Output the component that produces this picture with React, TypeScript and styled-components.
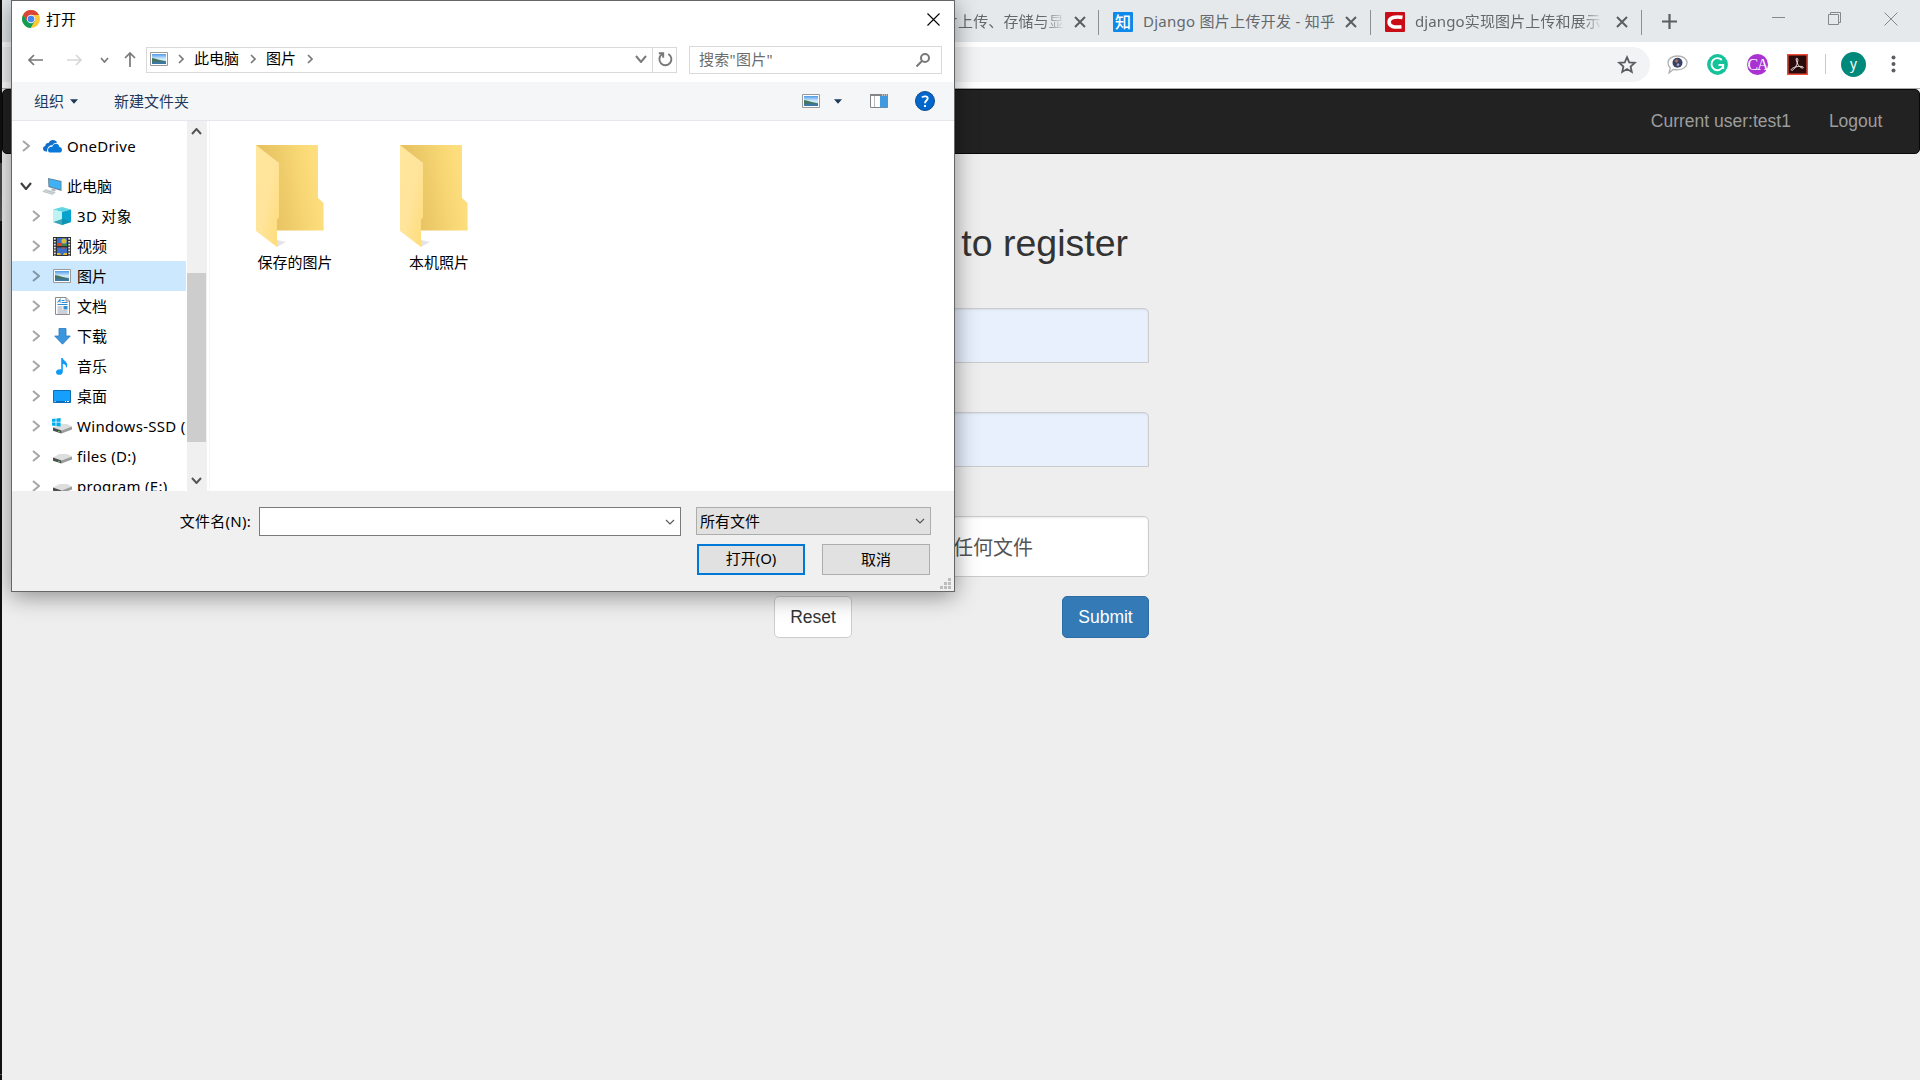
import React from "react";
import styled, { createGlobalStyle, css } from "styled-components";

const Global = createGlobalStyle`
  * { box-sizing: border-box; }
  body { margin: 0; overflow: hidden; }
`;

const uiFont = `"Noto Sans", "Noto Sans CJK SC", sans-serif`;
const pageFont = `"Liberation Sans", "Noto Sans CJK SC", sans-serif`;

/* ---------- browser ---------- */

const Screen = styled.div`
  position: relative;
  display: flex;
  width: 1920px;
  height: 1080px;
  overflow: hidden;
  background: #eee;
`;

const DesktopEdge = styled.div`
  width: 2px;
  flex: none;
  background: linear-gradient(#111 0 163px, #484848 163px 190px, #555 221px, #111 221px 1074px, #555 1074px 1075px, #111 1075px);
`;

const Browser = styled.div`
  flex: 1;
  display: flex;
  flex-direction: column;
  min-width: 0;
`;

const TabStrip = styled.div`
  display: flex;
  align-items: center;
  height: 42px;
  padding-left: 941px;
  background: #e5e9ec;
  font: 15px/42px ${uiFont};
  color: #64686c;
`;

const Tab = styled.div<{ $width: number }>`
  display: flex;
  align-items: center;
  width: ${(p) => p.$width}px;
  height: 25px;
  margin-top: 2px;
  border-right: 1px solid #8d9093;
`;

const TabTitle = styled.span<{ $width: number; $fade?: boolean; $gap: number; $spacing?: number }>`
  width: ${(p) => p.$width}px;
  margin: -3px 0 0 ${(p) => p.$gap}px;
  line-height: 24px;
  letter-spacing: ${(p) => p.$spacing ?? 0}px;
  white-space: nowrap;
  ${(p) =>
    p.$fade &&
    css`
      mask-image: linear-gradient(to right, #000 calc(100% - 22px), transparent);
    `}
`;

const Favicon = styled.span<{ $bg: string }>`
  display: flex;
  align-items: center;
  justify-content: center;
  width: 20px;
  height: 20px;
  margin-left: 14px;
  border-radius: 1px;
  background: ${(p) => p.$bg};
  color: #fff;
  font: 500 16px/19px ${uiFont};
`;

const Glyph = styled.svg<{ $ml?: number }>`
  display: block;
  flex: none;
  margin-left: ${(p) => p.$ml ?? 0}px;
`;

const WindowButtons = styled.div`
  display: flex;
  align-items: center;
  gap: 43px;
  margin: -5px 22px 0 auto;
`;

const Toolbar = styled.div`
  display: flex;
  align-items: center;
  height: 47px;
  padding-right: 20px;
  background: #fff;
  border-bottom: 1px solid #a9a9a9;
`;

const Omnibox = styled.div`
  display: flex;
  align-items: center;
  justify-content: flex-end;
  width: 1648px;
  height: 35px;
  padding-right: 13px;
  margin-top: -1px;
  border-radius: 0 18px 18px 0;
  background: #f1f3f4;
`;

const Extensions = styled.div`
  display: flex;
  align-items: center;
  margin-left: 17px;
  height: 46px;
  padding-bottom: 2px;
`;

const RoundBadge = styled.span<{ $bg: string; $size: number; $ml: number; $font: string; $spacing?: number }>`
  display: flex;
  align-items: center;
  justify-content: center;
  flex: none;
  width: ${(p) => p.$size}px;
  height: ${(p) => p.$size}px;
  margin-left: ${(p) => p.$ml}px;
  border-radius: 50%;
  background: ${(p) => p.$bg};
  color: #fff;
  font: ${(p) => p.$font};
  letter-spacing: ${(p) => p.$spacing ?? 0}px;
`;

const Rule = styled.span`
  width: 1px;
  height: 20px;
  margin-left: 17px;
  background: #c6c8ca;
`;

/* ---------- web page ---------- */

const Page = styled.main`
  flex: 1;
  background: #eee;
  font-family: ${pageFont};
  font-size: 17.5px;
  line-height: 25px;
`;

const Navbar = styled.nav`
  display: flex;
  justify-content: flex-end;
  height: 65px;
  padding: 19px 36.6px 0 0;
  gap: 38px;
  border: 1px solid #080808;
  border-radius: 5px;
  background: #222;
  color: #9d9d9d;
`;

const Form = styled.form`
  display: flex;
  flex-direction: column;
  width: 375px;
  margin-left: 772px;
`;

const Heading = styled.h2`
  margin: 69px 0 0;
  height: 85px;
  padding-right: 21px;
  text-align: right;
  font-size: 37.5px;
  font-weight: 400;
  line-height: 41px;
  color: #333;
`;

const Field = styled.div<{ $height: number; $bg: string; $radius: string; $gap: number }>`
  display: flex;
  align-items: center;
  height: ${(p) => p.$height}px;
  margin-bottom: ${(p) => p.$gap}px;
  padding: 4px 0 0 178px;
  border: 1px solid #ccc;
  border-radius: ${(p) => p.$radius};
  background: ${(p) => p.$bg};
  box-shadow: inset 0 1px 2px rgba(0, 0, 0, 0.08);
  color: #555;
  font-size: 20px;
`;

const Actions = styled.div`
  display: flex;
  justify-content: space-between;
`;

const FormButton = styled.button<{ $primary?: boolean }>`
  width: ${(p) => (p.$primary ? 87 : 78)}px;
  height: 42px;
  padding: 1px 0 0;
  border: 1px solid ${(p) => (p.$primary ? "#2e6da4" : "#ccc")};
  border-radius: 5px;
  background: ${(p) => (p.$primary ? "#337ab7" : "#fff")};
  color: ${(p) => (p.$primary ? "#fff" : "#333")};
  font: 17.5px ${pageFont};
`;

/* ---------- file dialog ---------- */

const Dialog = styled.section`
  position: absolute;
  left: 11px;
  top: 0;
  display: flex;
  flex-direction: column;
  width: 944px;
  height: 592px;
  border: 1px solid #666;
  background: #fff;
  box-shadow: 0 4px 22px rgba(0, 0, 0, 0.42);
  font: 15px/20px ${uiFont};
  color: #000;
`;

const TitleBar = styled.header`
  display: flex;
  align-items: center;
  height: 36px;
  padding: 0 14.500px 0 10px;
`;

const TitleText = styled.span`
  flex: 1;
  margin-left: 6px;
`;

const NavRow = styled.div`
  display: flex;
  align-items: center;
  height: 45px;
  padding-left: 16px;
`;

const AddressBar = styled.div`
  display: flex;
  align-items: center;
  width: 531px;
  height: 26px;
  margin-left: 10px;
  padding: 0 0 1px 3px;
  border: 1px solid #d9d9d9;
`;

const Crumb = styled.span<{ $ml: number; $lift?: number }>`
  margin: ${(p) => -(p.$lift ?? 0)}px 0 0 ${(p) => p.$ml}px;
  line-height: 22px;
`;

const Refresh = styled.span`
  display: flex;
  align-items: center;
  justify-content: center;
  width: 24px;
  height: 24px;
  margin: 1px 0 0 5px;
  padding-left: 1px;
  border-left: 1px solid #d9d9d9;
`;

const SearchBox = styled.div`
  display: flex;
  align-items: center;
  justify-content: space-between;
  width: 253px;
  height: 28px;
  margin-left: 12px;
  padding: 0 11px 0 9px;
  border: 1px solid #d9d9d9;
  color: #6d6d6d;
`;

const SearchText = styled.span`
  margin-top: -2px;
  letter-spacing: 0.3px;
`;

const CommandBar = styled.div`
  display: flex;
  align-items: center;
  height: 39px;
  padding: 0 19px 0 22px;
  border-bottom: 1px solid #e4e8ec;
  background: #f5f6f7;
  color: #1e395b;
`;

const Spacer = styled.span`
  flex: 1;
`;

const Body = styled.div`
  display: flex;
  height: 370px;
`;

const Tree = styled.div`
  width: 175px;
  height: 370px;
  padding-top: 10px;
  overflow: hidden;
`;

const TreeRow = styled.div<{ $level: number; $selected?: boolean; $after?: number }>`
  display: flex;
  align-items: center;
  width: 174px;
  height: 30px;
  margin-bottom: ${(p) => p.$after ?? 0}px;
  padding-left: ${(p) => (p.$level ? 18 : 8)}px;
  background: ${(p) => (p.$selected ? "#cce8ff" : "transparent")};
  white-space: nowrap;
  overflow: hidden;
`;

const TreeLabel = styled.span<{ $latin: boolean }>`
  letter-spacing: ${(p) => (p.$latin ? 0.3 : 0)}px;
`;

const Twisty = styled.span`
  display: flex;
  flex: none;
  width: 22px;
`;

const TreeIcon = styled.span`
  display: flex;
  flex: none;
  justify-content: center;
  width: 20px;
  margin-right: 5px;
`;

const Scrollbar = styled.div`
  display: flex;
  flex-direction: column;
  width: 20px;
  background: #f0f0f0;
`;

const ScrollArrow = styled.span`
  display: flex;
  align-items: center;
  justify-content: center;
  width: 19px;
  height: 21px;
`;

const Thumb = styled.div`
  width: 19px;
  height: 169px;
  margin-top: 131px;
  background: #cdcdcd;
`;

const Files = styled.div`
  display: flex;
  flex: 1;
  margin-left: 2px;
  padding: 24px 0 0 13px;
  border-left: 1px solid #f5f5f5;
`;

const FileItem = styled.figure`
  display: flex;
  flex-direction: column;
  align-items: center;
  width: 144px;
  margin: 0;
`;

const FileName = styled.figcaption`
  line-height: 24px;
`;

const Footer = styled.footer`
  flex: 1;
  display: flex;
  flex-direction: column;
  padding: 16px 0 0;
  background: #f0f0f0;
`;

const FooterRow = styled.div`
  display: flex;
  align-items: flex-start;
`;

const FieldLabel = styled.label`
  width: 247px;
  padding-right: 8px;
  text-align: right;
  line-height: 28px;
  letter-spacing: 0.25px;
`;

const Combo = styled.div<{ $kind: "input" | "select" }>`
  display: flex;
  align-items: center;
  justify-content: space-between;
  padding: 0 5px 0 3px;
  ${(p) =>
    p.$kind === "input"
      ? css`
          width: 422px;
          height: 29px;
          border: 1px solid #7a7a7a;
          background: #fff;
          justify-content: flex-end;
        `
      : css`
          width: 235px;
          height: 28px;
          margin-left: 15px;
          border: 1px solid #adadad;
          background: #e1e1e1;
        `}
`;

const ButtonRow = styled.div`
  display: flex;
  gap: 17px;
  margin: 8px 0 0 685px;
`;

const DialogButton = styled.button<{ $default?: boolean }>`
  width: 108px;
  height: 31px;
  padding: 0 0 ${(p) => (p.$default ? 3 : 2)}px;
  border: ${(p) => (p.$default ? "2px solid #0078d7" : "1px solid #adadad")};
  background: #e1e1e1;
  color: #000;
  font: 15px/20px ${uiFont};
`;

const GripCorner = styled.div`
  display: flex;
  justify-content: flex-end;
  padding: 3px 3px 0 0;
`;

/* ---------- drawings ---------- */

const TabClose = ({ ml }: { ml: number }) => (
  <Glyph $ml={ml} width="12" height="12" viewBox="0 0 12 12" stroke="#5a5e62" strokeWidth="2">
    <path d="M1 1l10 10M11 1L1 11" />
  </Glyph>
);

type ChevronProps = { dir: "right" | "down" | "up"; w?: number; h?: number; color?: string; sw?: number; ml?: number };

const Chevron = ({ dir, w = 6, h = 10, color = "#7a7a7a", sw = 1.7, ml = 0 }: ChevronProps) => {
  const paths = {
    right: `M1 1L${w - 1} ${h / 2}L1 ${h - 1}`,
    down: `M1 1L${w / 2} ${h - 1}L${w - 1} 1`,
    up: `M1 ${h - 1}L${w / 2} 1L${w - 1} ${h - 1}`,
  };
  return (
    <Glyph $ml={ml} width={w} height={h} viewBox={`0 0 ${w} ${h}`} fill="none" stroke={color} strokeWidth={sw}>
      <path d={paths[dir]} />
    </Glyph>
  );
};

const Caret = ({ ml }: { ml: number }) => (
  <Glyph $ml={ml} width="8" height="5" viewBox="0 0 8 5">
    <path d="M0 .3h8L4 4.7z" fill="#1e395b" />
  </Glyph>
);

const ChromeLogo = () => (
  <Glyph width="18" height="18" viewBox="0 0 18 18">
    <circle cx="9" cy="9" r="9" fill="#fbc934" />
    <path d="M1.2 4.5A9 9 0 0 0 8.6 18L12.7 11 9 9 5.3 11z" fill="#0f9d58" />
    <path d="M9 4.9h7.9A9 9 0 0 0 1.2 4.5L5 11z" fill="#db4437" />
    <circle cx="9" cy="9" r="4.2" fill="#f1f1f1" />
    <circle cx="9" cy="9" r="3.3" fill="#4285f4" />
  </Glyph>
);

const PictureIcon = () => (
  <Glyph width="18" height="14" viewBox="0 0 18 14">
    <defs>
      <linearGradient id="sky" x2="0" y2="1">
        <stop offset="0" stopColor="#4f9be8" />
        <stop offset=".5" stopColor="#d6eefb" />
        <stop offset="1" stopColor="#86b9dd" />
      </linearGradient>
    </defs>
    <path d="M.5.5h17v13H.5z" fill="#fff" stroke="#999" />
    <path d="M2 2h14v10H2z" fill="url(#sky)" />
    <path d="M2 6c3 .3 6 1.800 14 3.500V10H2z" fill="#45755d" />
    <path d="M2 9.700h14V12H2z" fill="#3d78a5" />
  </Glyph>
);

const OneDriveIcon = () => (
  <svg width="19" height="13" viewBox="0 0 19 13">
    <path d="M4 11.500H3.200C1.300 11.500 0 10.300 0 8.700 0 7.200 1 6.200 2.300 6 2.300 4 3.800 2.700 5.600 3 6.500 1.100 8 0 9.900 0c2 0 3.500 1 4.200 2.800-2.400-.3-4 .9-4.600 2.400C6.300 4.900 4.300 7 4 11.500z" fill="#0f6fcb" />
    <path d="M5 10.200c0-2.300 1.900-3.800 4.200-3.200.4-2.200 2-3.500 3.900-3.300 1.900.1 3.100 1.500 3.200 3.300 1.700.2 2.700 1.300 2.700 2.900 0 1.500-1 2.600-2.600 2.600H7.600C6.100 12.500 5 11.600 5 10.200z" fill="#0a78d8" />
  </svg>
);

const ComputerIcon = () => (
  <svg width="20" height="17" viewBox="0 0 20 17">
    <path d="M6 0l13.500 3v10L6.500 9z" fill="#5f7f95" />
    <path d="M7 1.100l11.600 2.700v7.800L7.300 8.300z" fill="#3eb2f5" />
    <path d="M10 10.500l4 1.200-1 1.500-4-1z" fill="#a9b4ba" />
    <path d="M3.500 11l10.500 3-3 2.800L0 13.500z" fill="#d3d9dc" />
    <path d="M1 13.500l10 3M3 12.200l10 2.800" stroke="#a8b1b6" strokeWidth=".6" />
  </svg>
);

const CubeIcon = () => (
  <svg width="18" height="18" viewBox="0 0 18 18">
    <path d="M9 0l9 2.600L9 5 0 2.600z" fill="#62d6e2" />
    <path d="M0 2.600L9 5v13l-9-3z" fill="#a9ecef" />
    <path d="M18 2.600L9 5v13l9-3z" fill="#07a3cf" />
    <path d="M9 11.500L18 15l-9 3-9-3z" fill="#128fa9" opacity=".75" />
    <path d="M0 2.600l9 2.400v7L0 15z" fill="#bff3f3" />
  </svg>
);

const VideoIcon = () => (
  <svg width="18" height="19" viewBox="0 0 18 19">
    <path d="M0 0h18v19H0z" fill="#303030" />
    <path d="M1.800 1v18M16.200 1v18" stroke="#e8e8e8" strokeWidth="1.800" strokeDasharray="1.700 1.200" />
    <path d="M4 1h10v8H4zM4 10.500h10V18H4z" fill="#3c70c8" />
    <circle cx="11" cy="4" r="2.600" fill="#d9bb32" />
    <path d="M4 6h5l1 3H4zM9 10.500h3l-1.500 3z" fill="#d9462b" />
    <path d="M9 7h5v2H9z" fill="#398a42" />
    <path d="M4 16h3l1 2H4zM11 16h3v2h-4z" fill="#e2b82f" />
  </svg>
);

const DocIcon = () => (
  <svg width="15" height="18" viewBox="0 0 15 18">
    <path d="M.5.500h10.500l3.500 3.500v13.500H.5z" fill="#fff" stroke="#8b8b8b" />
    <path d="M11 .5V4h3.500" fill="#ddd" stroke="#8b8b8b" />
    <path d="M2.500 5.500L5 2.500v3M6.500 3.500h3M6.500 5.500h6M2.500 7.500h10" stroke="#2a8bd5" fill="none" strokeWidth="1.100" />
    <path d="M2.500 10h5M2.500 12h5M2.500 14h10M2.500 16h10" stroke="#8c9aa5" strokeWidth=".9" />
    <path d="M8.500 9h4v3.500h-4z" fill="#348ed1" />
  </svg>
);

const DownloadIcon = () => (
  <svg width="17" height="17" viewBox="0 0 17 17">
    <path d="M5 .5h7v7.500h4.300L8.500 16.200.7 8H5z" fill="#3b96e0" stroke="#2779bd" strokeWidth=".8" />
  </svg>
);

const MusicIcon = () => (
  <svg width="12" height="17" viewBox="0 0 12 17">
    <path d="M5.200 0h1.600c.3 2.700 4.900 3.600 4.400 7.600-.2 1-.6 1.900-1.300 2.600.7-2.700-.8-4-3.100-4.500v7.700c0 2.100-1.400 3.400-3.500 3.400C1.300 16.800 0 15.800 0 14.200c0-1.800 1.700-3 3.700-3 .5 0 1 .1 1.500.3z" fill="#0f9bf5" />
  </svg>
);

const DesktopIcon = () => (
  <svg width="18" height="13" viewBox="0 0 18 13">
    <path d="M.5.500h17v12H.5z" fill="#14a0fc" stroke="#0c6db8" />
    <path d="M1 11.500h16" stroke="#0e70bd" />
    <path d="M1.500 11.500h1M12 11.500h1M14 11.500h2" stroke="#fff" />
  </svg>
);

const DriveIcon = ({ windows }: { windows?: boolean }) => (
  <svg width="20" height={windows ? 16 : 17} viewBox={windows ? "0 0 20 16" : "0 -5 20 17"}>
    <g transform={windows ? "translate(1 5)" : "translate(1 0)"}>
      <path d="M0 4.500L6.500 1H14l5 2.600L8.500 7.500z" fill="#dcdddd" />
      <path d="M19 3.600v2.800L8.500 10.500v-3z" fill="#9a9c9d" />
      <path d="M0 4.500l8.500 3v3L0 7.800z" fill="#4b4d4e" />
      <path d="M5 8.300l2 .6" stroke="#5fd35f" />
    </g>
    {windows && <path d="M0 1l3.600-.5v3.300H0zM4.400.4L8.600 0v3.800H4.400zM0 4.600h3.600V8L0 7.500zM4.400 4.600h4.200v4l-4.200-.5z" fill="#00adef" />}
  </svg>
);

const FolderIcon = () => (
  <svg width="78" height="105" viewBox="1 0 78 105">
    <defs>
      <linearGradient id="folderBack" x1="0" y1=".5" x2="1" y2=".3">
        <stop offset="0.2" stopColor="#e8c362" />
        <stop offset=".75" stopColor="#fada78" />
        <stop offset="1" stopColor="#ffe07f" />
      </linearGradient>
      <linearGradient id="folderFront" x2="1" y2="1">
        <stop offset="0" stopColor="#ffe79d" />
        <stop offset=".5" stopColor="#ffe49b" />
        <stop offset="1" stopColor="#ffdb78" />
      </linearGradient>
      <linearGradient id="folderShade">
        <stop offset="0" stopColor="#e2e2e2" />
        <stop offset="1" stopColor="#fff" />
      </linearGradient>
    </defs>
    <path d="M68 80l9 2-9 3zM22 95l9 2-9 5z" fill="url(#folderShade)" />
    <path d="M1 0h61q1 0 1 1v52l5.500 5v27.500H22z" fill="url(#folderBack)" />
    <path d="M1 0l23 18v54l-2 3v27L1 86z" fill="url(#folderFront)" />
  </svg>
);

const tree = [
  { label: "OneDrive", icon: <OneDriveIcon />, level: 0, after: 10 },
  { label: "此电脑", icon: <ComputerIcon />, level: 0, open: true },
  { label: "3D 对象", icon: <CubeIcon />, level: 1 },
  { label: "视频", icon: <VideoIcon />, level: 1 },
  { label: "图片", icon: <PictureIcon />, level: 1, selected: true },
  { label: "文档", icon: <DocIcon />, level: 1 },
  { label: "下载", icon: <DownloadIcon />, level: 1 },
  { label: "音乐", icon: <MusicIcon />, level: 1 },
  { label: "桌面", icon: <DesktopIcon />, level: 1 },
  { label: "Windows-SSD (", icon: <DriveIcon windows />, level: 1 },
  { label: "files (D:)", icon: <DriveIcon />, level: 1 },
  { label: "program (E:)", icon: <DriveIcon />, level: 1 },
];

const BrowserChrome = () => (
  <>
    <TabStrip>
      <Tab $width={156}>
        <TabTitle $width={122} $gap={0} $spacing={0.1} $fade>片上传、存储与显</TabTitle>
        <TabClose ml={9} />
      </Tab>
      <Tab $width={272}>
        <Favicon $bg="#0f88eb">知</Favicon>
        <TabTitle $width={195} $gap={10} $spacing={0.27}>Django 图片上传开发 - 知乎</TabTitle>
        <TabClose ml={7} />
      </Tab>
      <Tab $width={271}>
        <Favicon $bg="#ca0c16">
          <svg width="16" height="14" viewBox="0 0 16 14" fill="none" stroke="#fff" strokeWidth="3.600">
            <path d="M15.500 2.400C8 1.200 2.300 2.300 2.100 6.800c-.2 4.800 5 5.900 12.400 4.900" />
          </svg>
        </Favicon>
        <TabTitle $width={188} $gap={10} $spacing={0.12} $fade>django实现图片上传和展示</TabTitle>
        <TabClose ml={13} />
      </Tab>
      <Glyph $ml={20} width="15" height="15" viewBox="0 0 15 15" stroke="#5a5e62" strokeWidth="2.200">
        <path d="M7.500 0v15M0 7.500h15" />
      </Glyph>
      <WindowButtons>
        <Glyph width="13" height="13" viewBox="0 0 13 13" stroke="#85898c"><path d="M0 5.500h13" /></Glyph>
        <Glyph width="13" height="13" viewBox="0 0 13 13" fill="none" stroke="#85898c">
          <path d="M.5 2.500h10v10H.5zM2.500 2.500v-2h10v10h-2" />
        </Glyph>
        <Glyph width="14" height="14" viewBox="0 0 14 14" stroke="#85898c"><path d="M.5.500l13 13M13.500.500l-13 13" /></Glyph>
      </WindowButtons>
    </TabStrip>
    <Toolbar>
      <Omnibox>
        <svg width="20" height="20" viewBox="0 0 20 20" fill="none" stroke="#5a5e62" strokeWidth="1.800">
          <path d="M10 2.200l2.200 5.100 5.600.5-4.200 3.700 1.200 5.500-4.800-2.900L5.200 17l1.200-5.500-4.200-3.700 5.600-.5z" />
        </svg>
      </Omnibox>
      <Extensions>
        <Glyph width="21" height="19" viewBox="0 0 21 19">
          <path d="M10.500 1C16 1 20 3.800 20 7.800s-4 7-9.500 7c-1.500 0-2.800-.2-4-.5L2 18l1.300-5C1.800 11.700 1 9.900 1 7.800 1 3.800 5 1 10.500 1z" fill="#fff" stroke="#b2b2b2" strokeWidth="1.300" />
          <circle cx="10.500" cy="7.800" r="5" fill="#3a4166" />
          <path d="M7.500 6l2-2 2 1.500-2 2.500z" fill="#a9705c" />
          <path d="M11 8l1.500 1.500-1.500 2-1.500-1.500z" fill="#a5afc8" />
        </Glyph>
        <Glyph $ml={19} width="21" height="21" viewBox="0 0 21 21">
          <circle cx="10.500" cy="10.500" r="10.400" fill="#15c39a" />
          <path d="M14.800 6A6 6 0 1 0 16 12.500M11.500 11h4.700v4" fill="none" stroke="#fff" strokeWidth="1.900" />
        </Glyph>
        <RoundBadge $bg="#aa32d2" $size={21} $ml={19} $font={`16px/21px "Liberation Serif", serif`} $spacing={-1}>CA</RoundBadge>
        <Glyph $ml={19} width="21" height="21" viewBox="0 0 21 21">
          <path d="M.8.800h19.400v19.400H.8z" fill="#2a0b0b" stroke="#f04a36" strokeWidth="1.600" />
          <path d="M9.800 4.200c1.900 0 .9 5.200-1 8.300-1.600 2.700-3.900 4.800-4.500 3.400-.5-1.300 3.500-3.200 7.500-3.500 2.700-.2 4.900.3 4.500 1.300-.6 1.200-3.600-.5-5.200-2.900C9.600 8.500 8.300 4.200 9.800 4.200z" fill="none" stroke="#eee3e3" strokeWidth="1" />
        </Glyph>
        <Rule />
        <RoundBadge $bg="#00897b" $size={25} $ml={15} $font={`13.5px/20px ${uiFont}`}>y</RoundBadge>
        <Glyph $ml={25} width="5" height="18" viewBox="0 0 5 18" fill="#5a5e62">
          <circle cx="2.500" cy="2.500" r="2" /><circle cx="2.500" cy="9" r="2" /><circle cx="2.500" cy="15.500" r="2" />
        </Glyph>
      </Extensions>
    </Toolbar>
  </>
);

const FileDialog = () => (
  <Dialog>
    <TitleBar>
      <ChromeLogo />
      <TitleText>打开</TitleText>
      <Glyph width="13" height="13" viewBox="0 0 13 13" stroke="#000" strokeWidth="1.100"><path d="M.5.500l12 12M12.500.500l-12 12" /></Glyph>
    </TitleBar>
    <NavRow>
      <Glyph width="15" height="12" viewBox="0 0 15 12" fill="none" stroke="#787878" strokeWidth="1.700"><path d="M15 6H1M6 1L1 6l5 5" /></Glyph>
      <Glyph $ml={24} width="15" height="12" viewBox="0 0 15 12" fill="none" stroke="#d8d8d8" strokeWidth="1.700"><path d="M0 6h14M9 1l5 5-5 5" /></Glyph>
      <Chevron dir="down" w={9} h={6} ml={18} />
      <Glyph $ml={15} width="12" height="15" viewBox="0 0 12 15" fill="none" stroke="#787878" strokeWidth="1.700"><path d="M6 15V1M1 6l5-5 5 5" /></Glyph>
      <AddressBar>
        <PictureIcon />
        <Chevron dir="right" ml={10} />
        <Crumb $ml={10} $lift={2}>此电脑</Crumb>
        <Chevron dir="right" ml={11} />
        <Crumb $ml={10} $lift={2}>图片</Crumb>
        <Chevron dir="right" ml={11} />
        <Spacer />
        <Chevron dir="down" w={12} h={8} sw={2} />
        <Refresh>
          <svg width="15" height="15" viewBox="0 0 15 15" fill="none" stroke="#787878" strokeWidth="1.900">
            <path d="M10.300 2A6 6 0 1 1 4 2.300M.8 1.300h4.400v4.500" />
          </svg>
        </Refresh>
      </AddressBar>
      <SearchBox>
        <SearchText>搜索"图片"</SearchText>
        <svg width="14" height="14" viewBox="0 0 14 14" fill="none" stroke="#787878" strokeWidth="2">
          <circle cx="9" cy="5" r="4" /><path d="M6 8l-5.500 5.500" />
        </svg>
      </SearchBox>
    </NavRow>
    <CommandBar>
      组织
      <Caret ml={6} />
      <Crumb $ml={36}>新建文件夹</Crumb>
      <Spacer />
      <PictureIcon />
      <Caret ml={14} />
      <Glyph $ml={28} width="18" height="14" viewBox="0 0 18 14">
        <path d="M.5.500h17v13H.5z" fill="#fff" stroke="#858585" />
        <path d="M0 1h18" stroke="#858585" strokeWidth="2" />
        <path d="M4.500 2v11" stroke="#bbb" />
        <path d="M10 2h7.500v11.500H10z" fill="#4199e0" />
        <path d="M12 1h1M14 1h1M16 1h1" stroke="#fff" />
      </Glyph>
      <Glyph $ml={27} width="20" height="20" viewBox="0 0 20 20">
        <circle cx="10" cy="10" r="9.500" fill="#0067cd" stroke="#134b86" />
        <path d="M7 6.500C8 5 12.700 4.700 12.700 7.300c0 2.100-2.700 2.300-2.700 4.900M10 14v2" fill="none" stroke="#fff" strokeWidth="1.900" />
      </Glyph>
    </CommandBar>
    <Body>
      <Tree>
        {tree.map((n) => (
          <TreeRow key={n.label} $level={n.level} $selected={n.selected} $after={n.after}>
            <Twisty>
              {n.open ? (
                <Chevron dir="down" w={12} h={8} color="#404040" sw={2.2} />
              ) : (
                <Chevron dir="right" w={8} h={12} color={n.selected ? "#8296a5" : "#a6a6a6"} sw={2} ml={2} />
              )}
            </Twisty>
            <TreeIcon>{n.icon}</TreeIcon>
            <TreeLabel $latin={/^\w/.test(n.label)}>{n.label}</TreeLabel>
          </TreeRow>
        ))}
      </Tree>
      <Scrollbar>
        <ScrollArrow><Chevron dir="up" w={11} h={7} color="#555" sw={2} /></ScrollArrow>
        <Thumb />
        <Spacer />
        <ScrollArrow><Chevron dir="down" w={11} h={7} color="#555" sw={2} /></ScrollArrow>
      </Scrollbar>
      <Files>
        <FileItem><FolderIcon /><FileName>保存的图片</FileName></FileItem>
        <FileItem><FolderIcon /><FileName>本机照片</FileName></FileItem>
      </Files>
    </Body>
    <Footer>
      <FooterRow>
        <FieldLabel>文件名(N):</FieldLabel>
        <Combo $kind="input"><Chevron dir="down" w={10} h={6} color="#555" sw={1.1} /></Combo>
        <Combo $kind="select">所有文件<Chevron dir="down" w={10} h={6} color="#555" sw={1.1} /></Combo>
      </FooterRow>
      <ButtonRow>
        <DialogButton $default>打开(O)</DialogButton>
        <DialogButton>取消</DialogButton>
      </ButtonRow>
      <GripCorner>
        <svg width="11" height="11" viewBox="0 0 11 11" fill="#bcbcbc">
          <path d="M8 0h3v3H8zM4 4h3v3H4zM8 4h3v3H8zM0 8h3v3H0zM4 8h3v3H4zM8 8h3v3H8z" />
        </svg>
      </GripCorner>
    </Footer>
  </Dialog>
);

export default function App() {
  return (
    <Screen>
      <Global />
      <DesktopEdge />
      <Browser>
        <BrowserChrome />
        <Page>
          <Navbar>
            <span>Current user:test1</span>
            <span>Logout</span>
          </Navbar>
          <Form>
            <Heading>to register</Heading>
            <Field $height={55} $bg="#e8f0fe" $radius="5px 5px 0 0" $gap={49} />
            <Field $height={55} $bg="#e8f0fe" $radius="5px 5px 0 0" $gap={49} />
            <Field $height={61} $bg="#fff" $radius="5px" $gap={19}>任何文件</Field>
            <Actions>
              <FormButton type="button">Reset</FormButton>
              <FormButton type="button" $primary>Submit</FormButton>
            </Actions>
          </Form>
        </Page>
      </Browser>
      <FileDialog />
    </Screen>
  );
}
